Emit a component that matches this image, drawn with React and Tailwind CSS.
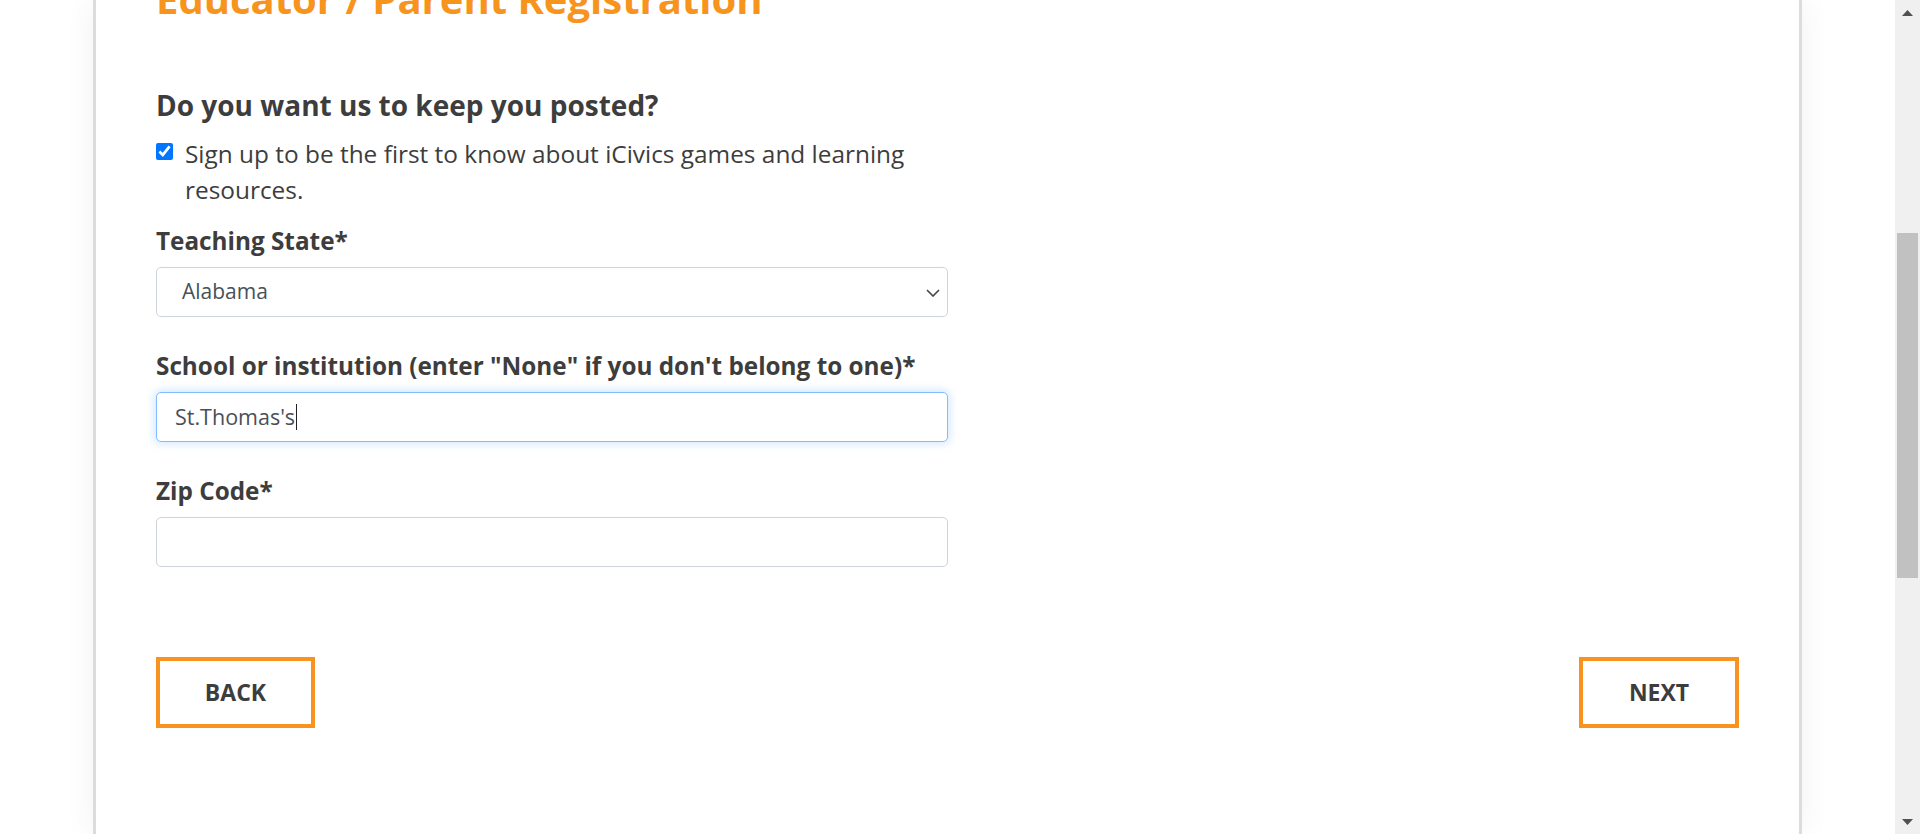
import React from 'react';

const FieldLabel = ({ children }) => (
  <label className="block text-[24.3px] leading-[28px] font-bold text-[#3d3d3d] mb-[12px]">{children}</label>
);

const StateSelect = () => (
  <div className="relative w-[792px] h-[50px] rounded-[5px] border border-[#ced4da] bg-white flex items-center pl-[25px]">
    <span className="text-[21px] text-[#495057]">Alabama</span>
    {/* chevron */}
    <svg className="absolute right-[7px] top-[21px] w-[14px] h-[8px]" viewBox="0 0 14 8" fill="none">
      <path d="M1 1l6 6 6-6" stroke="#444" strokeWidth="1.6" />
    </svg>
  </div>
);

const App = () => {
  return (
    <div className="h-[834px] w-full overflow-hidden flex bg-white" style={{ fontFamily: '"Open Sans", "Noto Sans", sans-serif' }}>
      <div className="flex-1 px-[93px]">
        <div className="flow-root h-full border-x-[3px] border-[#dcdcdc] shadow-[0_0_30px_rgba(0,0,0,0.06)] bg-white">
          <div className="px-[60px] -mt-[26px]">
            <h1 className="text-[40px] leading-[50px] font-bold text-[#f7941d]">
              Educator / Parent Registration
            </h1>

            <h2 className="mt-[64px] text-[28px] leading-[34px] font-bold text-[#3d3d3d]">
              Do you want us to keep you posted?
            </h2>

            <div className="mt-[14px] flex w-[792px]">
              <input type="checkbox" defaultChecked className="mt-[7px] w-[17px] h-[17px] shrink-0 accent-[#0075ff]" />
              <p className="ml-[12px] w-[755px] text-[24.4px] leading-[36px] text-[#3d3d3d]">
                Sign up to be the first to know about iCivics games and learning resources.
              </p>
            </div>

            <div className="mt-[19px] mb-[35px]">
              <FieldLabel>Teaching State*</FieldLabel>
              <StateSelect />
            </div>

            <div className="mb-[35px]">
              <FieldLabel>School or institution (enter "None" if you don't belong to one)*</FieldLabel>
              <div className="w-[792px] h-[50px] rounded-[5px] border border-[#80bdff] shadow-[0_0_8px_2px_rgba(0,123,255,0.18)] bg-white flex items-center pl-[18px]">
                <span className="text-[21.5px] text-[#495057]">St.Thomas's</span>
                <span className="ml-px w-px h-[26px] bg-[#222]" />
              </div>
            </div>

            <div>
              <FieldLabel>Zip Code*</FieldLabel>
              <div className="w-[792px] h-[50px] rounded-[5px] border border-[#ced4da] bg-white" />
            </div>

            <div className="mt-[90px] flex justify-between">
              <button className="w-[159px] h-[71px] border-[4px] border-[#f7931e] bg-white text-[23px] font-bold text-[#3d3d3d]">
                BACK
              </button>
              <button className="w-[160px] h-[71px] border-[4px] border-[#f7931e] bg-white text-[23px] font-bold text-[#3d3d3d]">
                NEXT
              </button>
            </div>
          </div>
        </div>
      </div>

      {/* scrollbar */}
      <div className="w-[25px] h-full bg-[#f0f0f0] flex flex-col items-center">
        <div className="h-[25px] flex items-center justify-center">
          <svg width="11" height="6" viewBox="0 0 11 6"><path d="M0 6L5.5 0L11 6Z" fill="#505050" /></svg>
        </div>
        <div className="mt-[208px] w-[21px] h-[345px] bg-[#c1c1c1]" />
        <div className="mt-auto h-[25px] flex items-center justify-center">
          <svg width="11" height="6" viewBox="0 0 11 6"><path d="M0 0L11 0L5.5 6Z" fill="#505050" /></svg>
        </div>
      </div>
    </div>
  );
};

export default App;
